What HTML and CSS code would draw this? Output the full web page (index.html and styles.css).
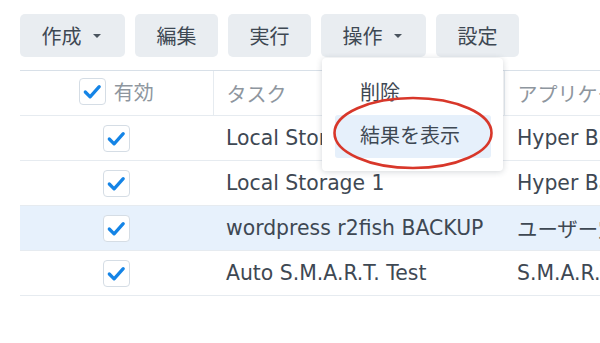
FILE: index.html
```html
<!DOCTYPE html>
<html lang="ja">

<head>
  <meta charset="utf-8">
  <title>タスクスケジューラ</title>
  <link rel="stylesheet" href="styles.css">
</head>

<body>

  <div class="toolbar">
    <button class="btn btn-menu">作成<span class="caret"></span></button>
    <button class="btn">編集</button>
    <button class="btn">実行</button>
    <div class="menu-wrap">
      <button class="btn btn-menu">操作<span class="caret"></span></button>
      <ul class="dropdown">
        <li>削除</li>
        <li class="active">結果を表示</li>
      </ul>
    </div>
    <button class="btn">設定</button>
  </div>

  <table class="tasks">
    <colgroup>
      <col class="col-enabled">
      <col class="col-task">
      <col class="col-app">
    </colgroup>
    <thead>
      <tr>
        <th class="c-check">
          <span class="check-label">
            <span class="checkbox"><svg viewBox="0 0 26 26"><path d="M5.5 13.5 L10.5 18.5 L20 8"/></svg></span>
            有効
          </span>
        </th>
        <th>タスク</th>
        <th>アプリケーション</th>
      </tr>
    </thead>
    <tbody>
      <tr>
        <td class="c-check"><span class="checkbox"><svg viewBox="0 0 26 26"><path d="M5.5 13.5 L10.5 18.5 L20 8"/></svg></span></td>
        <td>Local Storage</td>
        <td>Hyper Backup</td>
      </tr>
      <tr>
        <td class="c-check"><span class="checkbox"><svg viewBox="0 0 26 26"><path d="M5.5 13.5 L10.5 18.5 L20 8"/></svg></span></td>
        <td>Local Storage 1</td>
        <td>Hyper Backup</td>
      </tr>
      <tr class="selected">
        <td class="c-check"><span class="checkbox"><svg viewBox="0 0 26 26"><path d="M5.5 13.5 L10.5 18.5 L20 8"/></svg></span></td>
        <td>wordpress r2fish BACKUP</td>
        <td>ユーザー定義のスクリプト</td>
      </tr>
      <tr>
        <td class="c-check"><span class="checkbox"><svg viewBox="0 0 26 26"><path d="M5.5 13.5 L10.5 18.5 L20 8"/></svg></span></td>
        <td>Auto S.M.A.R.T. Test</td>
        <td>S.M.A.R.T. Test</td>
      </tr>
    </tbody>
  </table>

  <!-- red annotation circle -->
  <svg class="annotation" viewBox="0 0 166 80">
    <ellipse cx="83" cy="39" rx="78.5" ry="35" />
  </svg>

</body>

</html>
```

FILE: styles.css
```css
* {
  margin: 0;
  padding: 0;
  box-sizing: border-box;
}

body {
  position: relative;
  width: 600px;
  height: 343px;
  overflow: hidden;
  padding: 14px 0 0 20px;
  background: #fff;
  color: #3e4853;
  font-family: "DejaVu Sans", "Noto Sans CJK JP", sans-serif;
  font-size: 20px;
}

/* Toolbar */
.toolbar {
  display: flex;
  gap: 10px;
  position: relative;
  z-index: 2;
}

.btn {
  display: flex;
  align-items: center;
  height: 43px;
  padding: 0 21.5px;
  border: none;
  border-radius: 5px;
  background: #e9edf1;
  color: #3e4853;
  font-family: inherit;
  font-size: 20px;
}

.btn-menu {
  padding-right: 24.5px;
}

.caret {
  margin-left: 11px;
  border-top: 4px solid #4a545e;
  border-left: 4px solid transparent;
  border-right: 4px solid transparent;
}

.menu-wrap {
  position: relative;
}

.dropdown {
  position: absolute;
  top: 44px;
  left: 1px;
  width: 181px;
  padding: 14px 12px 13px 13px;
  list-style: none;
  background: #fff;
  border-radius: 4px;
  box-shadow: 0 1px 6px rgba(40, 55, 70, 0.2);
}

.dropdown li {
  height: 43px;
  line-height: 43px;
  padding-left: 25px;
  border-radius: 3px;
}

.dropdown li.active {
  background: #e6f0fb;
}

/* Task table */
.tasks {
  margin-top: 13px;
  width: 800px;
  table-layout: fixed;
  border-collapse: collapse;
}

.col-enabled {
  width: 193px;
}

.col-task {
  width: 291px;
}

.col-app {
  width: 316px;
}

.tasks th,
.tasks td {
  height: 45px;
  padding: 0 0 0 13px;
  text-align: left;
  vertical-align: middle;
  white-space: nowrap;
  overflow: hidden;
  border-bottom: 1px solid #e6ebf0;
}

.tasks td {
  font-size: 20.4px;
}

.tasks th {
  font-weight: normal;
  color: #8e969e;
  border-top: 1px solid #d8e0e8;
  border-left: 1px solid #e6ebf0;
}

.tasks th.c-check,
.tasks td.c-check {
  padding: 0;
  text-align: center;
  border-left: none;
}

.tasks tr.selected td {
  background: #e7f1fc;
}

.check-label {
  display: inline-flex;
  align-items: center;
  gap: 8px;
}

.checkbox {
  display: inline-block;
  width: 27px;
  height: 27px;
  vertical-align: middle;
  background: #fff;
  border: 1px solid #d5dde5;
  border-radius: 4px;
}

.checkbox svg {
  display: block;
  width: 25px;
  height: 25px;
  fill: none;
  stroke: #1484e6;
  stroke-width: 3.4;
  stroke-linecap: round;
  stroke-linejoin: round;
}

/* Annotation */
.annotation {
  position: absolute;
  left: 330px;
  top: 94px;
  width: 166px;
  height: 80px;
  z-index: 3;
  fill: none;
  stroke: #d8372a;
  stroke-width: 2.6;
}
```
